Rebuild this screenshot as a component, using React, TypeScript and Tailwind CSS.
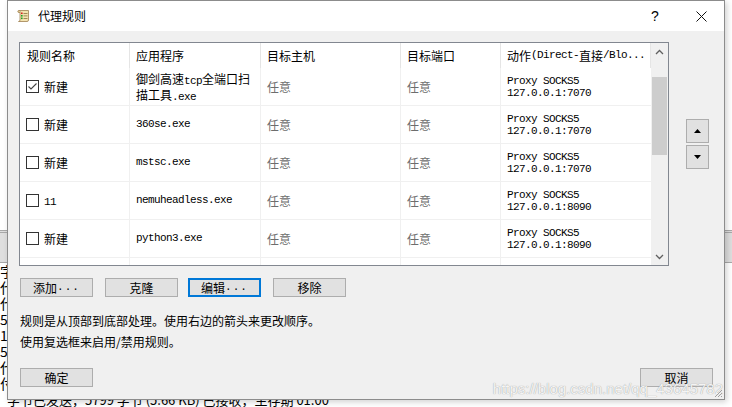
import React from 'react';

const cjk = "font-['Noto_Sans_CJK_SC',sans-serif]";
const mono = "font-['Liberation_Mono','Noto_Sans_CJK_SC',monospace] text-[11px] tracking-[-0.6px]";

type Rule = { on: boolean; name: React.ReactNode; app: React.ReactNode; port: string };

const rules: Rule[] = [
  {
    on: true,
    name: '新建',
    app: (
      <div className="leading-[12px]">
        <div>
          <span className="text-[12px]">御剑高速</span>
          <span className={mono}>tcp</span>
          <span className="text-[12px]">全端口扫</span>
        </div>
        <div>
          <span className="text-[12px]">描工具</span>
          <span className={mono}>.exe</span>
        </div>
      </div>
    ),
    port: '7070',
  },
  { on: false, name: '新建', app: <span className={mono}>360se.exe</span>, port: '7070' },
  { on: false, name: '新建', app: <span className={mono}>mstsc.exe</span>, port: '7070' },
  { on: false, name: <span className={mono}>11</span>, app: <span className={mono}>nemuheadless.exe</span>, port: '8090' },
  { on: false, name: '新建', app: <span className={mono}>python3.exe</span>, port: '8090' },
];

// only the first glyph of each log line peeks out beside the dialog
const logLines = ['字', '代', '代', '5', '1', '5', '代', '付'];

function Checkbox({ on }: { on: boolean }) {
  return (
    <div className="w-[13px] h-[13px] border border-[#333] bg-white flex items-center justify-center shrink-0">
      {on && (
        <svg width="11" height="11" viewBox="0 0 11 11">
          <polyline points="1.5,5.5 4,8 9.5,2.5" fill="none" stroke="#444" strokeWidth="1.1" />
        </svg>
      )}
    </div>
  );
}

function Btn({ children, focused, className }: { children: React.ReactNode; focused?: boolean; className?: string }) {
  return (
    <div
      className={
        'w-[73px] h-[19px] flex items-center justify-center text-[12px] text-black bg-[#e1e1e1] ' +
        (focused ? 'border-2 border-[#0078d7] ' : 'border border-[#adadad] ') +
        (className ?? '')
      }
    >
      {children}
    </div>
  );
}

function Dots() {
  return <span className={mono + ' tracking-[1px]'}>...</span>;
}

function TitleIcon() {
  return (
    <svg width="13" height="14" viewBox="0 0 13 14">
      <path d="M2 1.5 H11.5 V11 Q11.5 12.5 10 12.5 H1.5 Q3 12.5 3 11 V2.5 Q3 1.5 2 1.5 Z" fill="#f3e3b0" stroke="#a08050" strokeWidth="0.8" />
      <path d="M2 1.5 Q0.8 1.5 0.8 2.5 Q0.8 3.5 2 3.5 H3" fill="#e6cf8c" stroke="#a08050" strokeWidth="0.8" />
      <rect x="4" y="3.5" width="1.6" height="1.6" fill="#d62020" />
      <rect x="4" y="6" width="1.6" height="1.6" fill="#20a020" />
      <rect x="4" y="8.5" width="1.6" height="1.6" fill="#20a020" />
      <rect x="6.5" y="4" width="4" height="0.8" fill="#8a7040" />
      <rect x="6.5" y="6.5" width="4" height="0.8" fill="#8a7040" />
      <rect x="6.5" y="9" width="4" height="0.8" fill="#8a7040" />
    </svg>
  );
}

function Chevron({ up }: { up?: boolean }) {
  return (
    <svg width="9" height="6" viewBox="0 0 9 6">
      <polyline
        points={up ? '1,5 4.5,1.5 8,5' : '1,1 4.5,4.5 8,1'}
        fill="none"
        stroke="#606060"
        strokeWidth="1.3"
      />
    </svg>
  );
}

function Table() {
  const cols = 'grid grid-cols-[110px_131px_140px_100px_150px]';
  return (
    <div className="w-[650px] h-[224px] border border-[#828790] bg-white flex">
      <div className="w-[631px] overflow-hidden">
        <div className={cols + ' h-[25px] text-[12px] text-black'}>
          <div className="pl-[7px] flex items-center border-r border-[#e5e5e5]">规则名称</div>
          <div className="pl-[6px] flex items-center border-r border-[#e5e5e5]">应用程序</div>
          <div className="pl-[6px] flex items-center border-r border-[#e5e5e5]">目标主机</div>
          <div className="pl-[6px] flex items-center border-r border-[#e5e5e5]">目标端口</div>
          <div className="pl-[6px] flex items-center border-r border-[#e5e5e5] whitespace-nowrap">
            动作<span className={mono}>(Direct-</span>直接<span className={mono}>/Blo...</span>
          </div>
        </div>
        {rules.map((r, i) => (
          <div key={i} className={cols + ' h-[38px] border-b border-[#f0f0f0]'}>
            <div className="pl-[6px] flex items-center gap-[5px] border-r border-[#f0f0f0] text-[12px] text-black">
              <Checkbox on={r.on} />
              <span>{r.name}</span>
            </div>
            <div className="pl-[6px] flex items-center border-r border-[#f0f0f0] text-black">{r.app}</div>
            <div className="pl-[6px] flex items-center border-r border-[#f0f0f0] text-[12px] text-[#6d6d6d]">任意</div>
            <div className="pl-[6px] flex items-center border-r border-[#f0f0f0] text-[12px] text-[#6d6d6d]">任意</div>
            <div className={'pl-[6px] flex flex-col justify-center leading-[12px] text-black ' + mono}>
              <span>Proxy SOCKS5</span>
              <span>127.0.0.1:{r.port}</span>
            </div>
          </div>
        ))}
        <div className={cols + ' h-[38px]'}>
          <div className="border-r border-[#f0f0f0]" />
          <div className="border-r border-[#f0f0f0]" />
          <div className="border-r border-[#f0f0f0]" />
          <div className="border-r border-[#f0f0f0]" />
          <div />
        </div>
      </div>
      <div className="w-[17px] bg-[#f0f0f0] flex flex-col">
        <div className="h-[17px] flex items-center justify-center">
          <Chevron up />
        </div>
        <div className="flex-1 flex flex-col items-center">
          <div className="mt-[17px] w-[15px] h-[78px] bg-[#cdcdcd]" />
        </div>
        <div className="h-[17px] flex items-center justify-center">
          <Chevron />
        </div>
      </div>
    </div>
  );
}

function ArrowBtn({ up }: { up?: boolean }) {
  return (
    <div className="w-[23px] h-[24px] border border-[#adadad] bg-[#e1e1e1] flex items-center justify-center">
      <svg width="7" height="4" viewBox="0 0 7 4">
        <polygon points={up ? '3.5,0 7,4 0,4' : '0,0 7,0 3.5,4'} fill="#000" />
      </svg>
    </div>
  );
}

export default function App() {
  return (
    <div className={'relative w-[732px] h-[407px] overflow-hidden bg-white ' + cjk}>
      {/* background window */}
      <div className="flex flex-col h-full">
        <div className="h-[234px]" />
        <div className="h-[33px] border-t-[3px] border-double border-b border-[#a8a8a8] bg-[#dedede]" />
        <div className="flex flex-col text-[14px] leading-[16px] text-black whitespace-nowrap">
          {logLines.map((l, i) => (
            <div key={i}>{l}</div>
          ))}
          <div className="pl-[7px] text-[13px] leading-[15px] pt-[1px]">字节已发送，5799 字节 (5.66 KB) 已接收，生存期 01:00</div>
        </div>
      </div>

      {/* dialog window */}
      <div className="absolute left-[7px] top-0 w-[718px] h-[400px] border border-[#8c8c8c] bg-[#f0f0f0] flex flex-col shadow-[2px_2px_6px_rgba(0,0,0,0.18)]">
        <div className="h-[30px] bg-white flex items-center shrink-0">
          <div className="pl-[9px] flex items-center">
            <TitleIcon />
          </div>
          <span className="ml-[8px] text-[12px] text-black">代理规则</span>
          <div className="ml-auto flex h-full">
            <div className="w-[46px] h-full flex items-center justify-center text-[14px] text-black font-['Liberation_Sans',sans-serif]">?</div>
            <div className="w-[46px] h-full flex items-center justify-center">
              <svg width="11" height="11" viewBox="0 0 11 11">
                <path d="M0.5 0.5 L10.5 10.5 M10.5 0.5 L0.5 10.5" stroke="#111" strokeWidth="1" />
              </svg>
            </div>
          </div>
        </div>

        <div className="flex-1 px-[11px] pt-[11px] flex flex-col">
          <div className="flex">
            <Table />
            <div className="ml-[17px] mt-[77px] flex flex-col gap-[2px]">
              <ArrowBtn up />
              <ArrowBtn />
            </div>
          </div>

          <div className="mt-[12px] flex ml-[1px]">
            <Btn>
              添加<Dots />
            </Btn>
            <Btn className="ml-[12px]">克隆</Btn>
            <Btn className="ml-[10px]" focused>
              编辑<Dots />
            </Btn>
            <Btn className="ml-[12px]">移除</Btn>
          </div>

          <div className="mt-[13px] h-[21px] flex items-center text-[12px] text-black ml-[1px]">
            规则是从顶部到底部处理。使用右边的箭头来更改顺序。
          </div>
          <div className="h-[21px] flex items-center text-[12px] text-black ml-[1px]">使用复选框来启用/禁用规则。</div>

          <div className="mt-[16px] flex justify-between ml-[1px]">
            <Btn>确定</Btn>
            <Btn>取消</Btn>
          </div>
        </div>

        <div className="absolute right-[1px] bottom-[2px] text-[15px] leading-[16px] text-[#f4f4f4] font-['Liberation_Sans',sans-serif] [text-shadow:0_0_1px_#8a8a8a]">
          https://blog.csdn.net/qq_43645782
        </div>
        <div className="absolute right-[1px] bottom-[1px]">
          <svg width="10" height="10" viewBox="0 0 10 10">
            <path d="M9 2 L2 9 M9 5 L5 9 M9 8 L8 9" stroke="#a0a0a0" strokeWidth="1" />
          </svg>
        </div>
      </div>
    </div>
  );
}
